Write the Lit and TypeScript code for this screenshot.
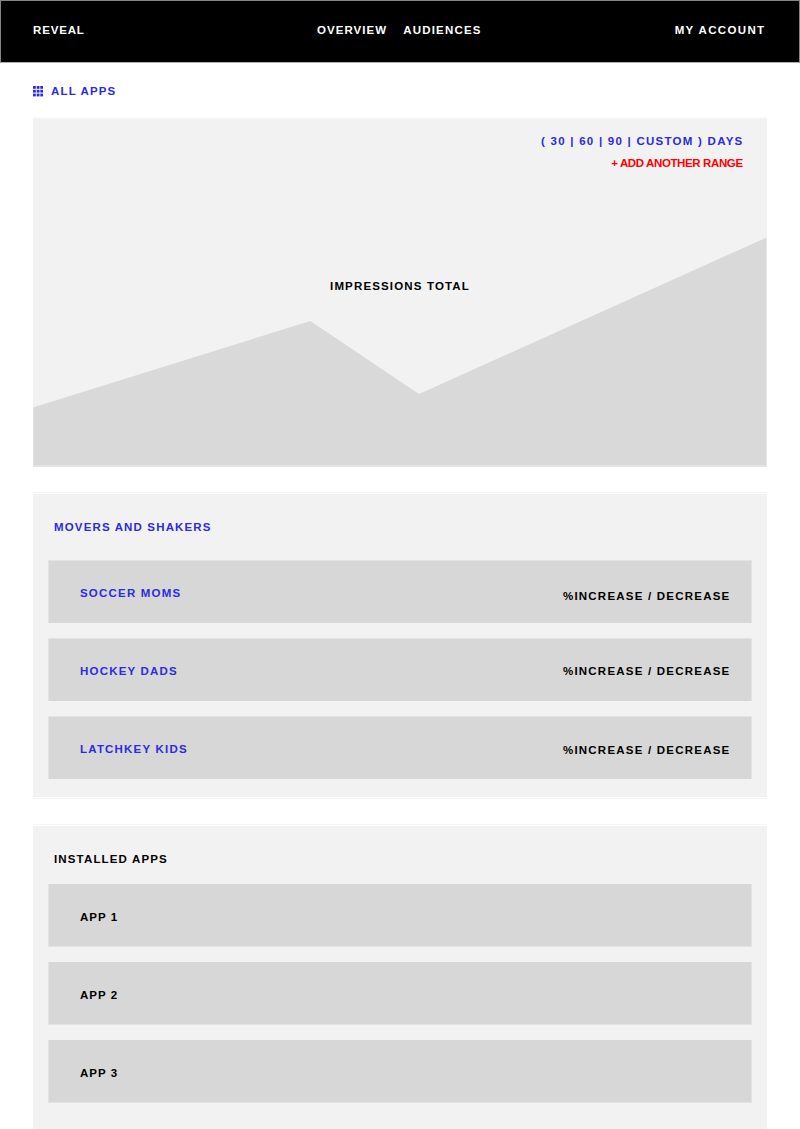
import { LitElement, html, svg, css } from "lit";
import { customElement, property } from "lit/decorators.js";
import { classMap } from "lit/directives/class-map.js";

interface Mover {
  name: string;
  shift: "low" | "mid" | "high";
}

const MOVERS: Mover[] = [
  { name: "SOCCER MOMS", shift: "low" },
  { name: "HOCKEY DADS", shift: "high" },
  { name: "LATCHKEY KIDS", shift: "mid" },
];

const APPS = ["APP 1", "APP 2", "APP 3"];

@customElement("top-bar")
export class TopBar extends LitElement {
  static styles = css`
    :host {
      display: block;
    }
    .bar {
      box-sizing: border-box;
      height: 63px;
      border: 1px solid #858585;
      border-bottom-color: #b0b0b0;
      background: #000;
      color: #fff;
      padding: 23px 33.5px 0 32px;
      display: grid;
      grid-template-columns: 284px 1fr auto;
      line-height: 12px;
    }
    .brand {
      letter-spacing: 0.85px;
    }
    .links {
      display: flex;
      gap: 16px;
      letter-spacing: 1.05px;
    }
    .audiences {
      letter-spacing: 1.2px;
    }
    .account {
      letter-spacing: 1.35px;
    }
  `;

  render() {
    return html`
      <header class="bar">
        <span class="brand">REVEAL</span>
        <nav class="links"><span>OVERVIEW</span><span class="audiences">AUDIENCES</span></nav>
        <span class="account">MY ACCOUNT</span>
      </header>
    `;
  }
}

@customElement("impressions-chart")
export class ImpressionsChart extends LitElement {
  static styles = css`
    :host {
      display: block;
    }
    .chart {
      box-sizing: border-box;
      height: 350px;
      border-top: 2px solid #f8f8f8;
      background: #f2f2f2;
      display: grid;
    }
    .area {
      grid-area: 1 / 1;
      display: block;
      width: 734px;
      height: 348px;
    }
    .labels {
      grid-area: 1 / 1;
      display: flex;
      flex-direction: column;
      padding-top: 16px;
      line-height: 12px;
    }
    .ranges {
      align-self: flex-end;
      margin-right: 23.5px;
      color: #2b2be0;
      letter-spacing: 1.25px;
    }
    .add {
      align-self: flex-end;
      margin: 10px 24.3px 0 0;
      color: #f00;
      letter-spacing: -0.38px;
    }
    .title {
      align-self: center;
      margin-top: 111px;
      color: #000;
    }
  `;

  render() {
    return html`
      <section class="chart">
        <svg class="area" viewBox="0 0 734 348">
          <path d="M0 288.5 277.3 202 386 275 733.5 118.5V346H734V348H0Z" fill="#d9d9d9" />
          <path d="M0 288V348M733.5 119V348" stroke="#e6e6e6" stroke-width="1" />
          <path d="M0 347H734" stroke="#e5e5e5" stroke-width="2" />
        </svg>
        <div class="labels">
          <span class="ranges">( 30 | 60 | 90 | CUSTOM ) DAYS</span>
          <span class="add">+ ADD ANOTHER RANGE</span>
          <span class="title">IMPRESSIONS TOTAL</span>
        </div>
      </section>
    `;
  }
}

@customElement("list-row")
export class ListRow extends LitElement {
  @property() label = "";
  @property() detail = "";
  @property() shift = "mid";
  @property({ type: Boolean }) link = false;

  static styles = css`
    :host {
      display: block;
    }
    .row {
      box-sizing: border-box;
      height: 63px;
      border: 1px solid #e3e3e3;
      border-bottom: 0;
      background: #d7d7d7;
      display: flex;
      justify-content: space-between;
      padding: 26px 20.5px 0 31px;
      line-height: 12px;
      color: #000;
    }
    .plain {
      border-top: 0;
      border-bottom: 1px solid #e3e3e3;
      padding-top: 27px;
    }
    .link {
      color: #2b2be0;
      letter-spacing: 1.2px;
    }
    .detail {
      letter-spacing: 1.22px;
    }
    .low {
      padding-top: 3px;
    }
    .mid {
      padding-top: 1px;
    }
  `;

  render() {
    return html`
      <div class=${classMap({ row: true, plain: !this.link })}>
        <span class=${classMap({ link: this.link })}>${this.label}</span>
        ${this.detail
          ? html`<span class=${classMap({ detail: true, low: this.shift === "low", mid: this.shift === "mid" })}
              >${this.detail}</span
            >`
          : null}
      </div>
    `;
  }
}

@customElement("app-root")
export class AppRoot extends LitElement {
  static styles = css`
    :host {
      display: block;
      box-sizing: border-box;
      height: 1129px;
      overflow: hidden;
      background: #fff;
      font: bold 11.5px/12px "Liberation Sans", Arial, sans-serif;
      letter-spacing: 1.15px;
    }
    .content {
      padding: 0 33px;
    }
    .all {
      display: flex;
      gap: 8px;
      height: 32px;
      padding-top: 22px;
      color: #2b2be0;
    }
    .grid-icon {
      display: block;
      width: 10px;
      height: 11px;
      margin-top: 1px;
    }
    .panel {
      box-sizing: border-box;
      border-top: 1px solid #f6f6f6;
      border-bottom: 1px solid #f6f6f6;
      padding: 1px 0;
      background: #f2f2f2 content-box;
    }
    .movers {
      margin-top: 25px;
      height: 307px;
    }
    .apps {
      margin-top: 25px;
      height: 320px;
    }
    .inner {
      padding: 27px 15px 0;
    }
    .heading {
      margin: 0 0 0 6px;
      font: inherit;
      color: #000;
    }
    .blue {
      color: #2b2be0;
    }
    .rows {
      display: flex;
      flex-direction: column;
      gap: 15px;
      margin-top: 27px;
    }
    .tight {
      margin-top: 19px;
      letter-spacing: 1.05px;
    }
  `;

  render() {
    return html`
      <top-bar></top-bar>
      <main class="content">
        <div class="all">
          <svg class="grid-icon" viewBox="0 0 10 11" fill="currentColor">
            ${[0, 3.7, 7.3].map((x) =>
              [0, 3.8, 7.6].map((y) => svg`<rect x=${x} y=${y} width="2.8" height="2.8" />`)
            )}
          </svg>
          <span>ALL APPS</span>
        </div>
        <impressions-chart></impressions-chart>
        <section class="panel movers">
          <div class="inner">
            <h2 class="heading blue">MOVERS AND SHAKERS</h2>
            <div class="rows">
              ${MOVERS.map(
                (m) => html`<list-row link label=${m.name} shift=${m.shift} detail="%INCREASE / DECREASE"></list-row>`
              )}
            </div>
          </div>
        </section>
        <section class="panel apps">
          <div class="inner">
            <h2 class="heading">INSTALLED APPS</h2>
            <div class="rows tight">${APPS.map((a) => html`<list-row label=${a}></list-row>`)}</div>
          </div>
        </section>
      </main>
    `;
  }
}
